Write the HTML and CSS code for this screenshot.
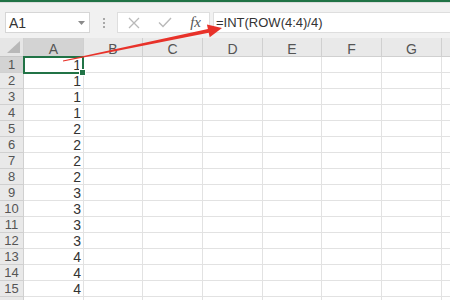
FILE: index.html
```html
<!DOCTYPE html>
<html>
<head>
    <link rel="stylesheet" href="styles.css">
</head>
<body>

    <div class="app">
        <div class="ribbon-edge"></div>

        <div class="formula-bar">
            <div class="name-box">
                <span>A1</span>
                <svg class="caret" width="7" height="4" viewBox="0 0 7 4"><path d="M0 0h7L3.5 4z" fill="#8a8a8a"/></svg>
            </div>
            <div class="grip"><i></i><i></i><i></i></div>
            <div class="fx-buttons">
                <svg width="12" height="12" viewBox="0 0 12 12"><path d="M1 1l10 10M11 1L1 11" stroke="#b9b9b9" stroke-width="1.3" fill="none"/></svg>
                <svg width="14" height="11" viewBox="0 0 14 11"><path d="M1 5.5l4 4L13 1" stroke="#b9b9b9" stroke-width="1.4" fill="none"/></svg>
                <span class="fx">fx</span>
            </div>
            <div class="formula-input">=INT(ROW(4:4)/4)</div>
        </div>

        <div class="sheet">
            <div class="corner"></div>
            <div class="col-head active">A</div><div class="col-head">B</div><div class="col-head">C</div><div class="col-head">D</div><div class="col-head">E</div><div class="col-head">F</div><div class="col-head">G</div><div class="col-head"></div>

            <div class="row-head active">1</div><div class="cell num selected">1</div><div class="cell"></div><div class="cell"></div><div class="cell"></div><div class="cell"></div><div class="cell"></div><div class="cell"></div><div class="cell"></div>
            <div class="row-head">2</div><div class="cell num">1</div><div class="cell"></div><div class="cell"></div><div class="cell"></div><div class="cell"></div><div class="cell"></div><div class="cell"></div><div class="cell"></div>
            <div class="row-head">3</div><div class="cell num">1</div><div class="cell"></div><div class="cell"></div><div class="cell"></div><div class="cell"></div><div class="cell"></div><div class="cell"></div><div class="cell"></div>
            <div class="row-head">4</div><div class="cell num">1</div><div class="cell"></div><div class="cell"></div><div class="cell"></div><div class="cell"></div><div class="cell"></div><div class="cell"></div><div class="cell"></div>
            <div class="row-head">5</div><div class="cell num">2</div><div class="cell"></div><div class="cell"></div><div class="cell"></div><div class="cell"></div><div class="cell"></div><div class="cell"></div><div class="cell"></div>
            <div class="row-head">6</div><div class="cell num">2</div><div class="cell"></div><div class="cell"></div><div class="cell"></div><div class="cell"></div><div class="cell"></div><div class="cell"></div><div class="cell"></div>
            <div class="row-head">7</div><div class="cell num">2</div><div class="cell"></div><div class="cell"></div><div class="cell"></div><div class="cell"></div><div class="cell"></div><div class="cell"></div><div class="cell"></div>
            <div class="row-head">8</div><div class="cell num">2</div><div class="cell"></div><div class="cell"></div><div class="cell"></div><div class="cell"></div><div class="cell"></div><div class="cell"></div><div class="cell"></div>
            <div class="row-head">9</div><div class="cell num">3</div><div class="cell"></div><div class="cell"></div><div class="cell"></div><div class="cell"></div><div class="cell"></div><div class="cell"></div><div class="cell"></div>
            <div class="row-head">10</div><div class="cell num">3</div><div class="cell"></div><div class="cell"></div><div class="cell"></div><div class="cell"></div><div class="cell"></div><div class="cell"></div><div class="cell"></div>
            <div class="row-head">11</div><div class="cell num">3</div><div class="cell"></div><div class="cell"></div><div class="cell"></div><div class="cell"></div><div class="cell"></div><div class="cell"></div><div class="cell"></div>
            <div class="row-head">12</div><div class="cell num">3</div><div class="cell"></div><div class="cell"></div><div class="cell"></div><div class="cell"></div><div class="cell"></div><div class="cell"></div><div class="cell"></div>
            <div class="row-head">13</div><div class="cell num">4</div><div class="cell"></div><div class="cell"></div><div class="cell"></div><div class="cell"></div><div class="cell"></div><div class="cell"></div><div class="cell"></div>
            <div class="row-head">14</div><div class="cell num">4</div><div class="cell"></div><div class="cell"></div><div class="cell"></div><div class="cell"></div><div class="cell"></div><div class="cell"></div><div class="cell"></div>
            <div class="row-head">15</div><div class="cell num">4</div><div class="cell"></div><div class="cell"></div><div class="cell"></div><div class="cell"></div><div class="cell"></div><div class="cell"></div><div class="cell"></div>
            <div class="row-head"></div><div class="cell"></div><div class="cell"></div><div class="cell"></div><div class="cell"></div><div class="cell"></div><div class="cell"></div><div class="cell"></div><div class="cell"></div>
        </div>

        <!-- red annotation arrow drawn over the sheet -->
        <svg class="arrow" width="450" height="300" viewBox="0 0 450 300">
            <polygon points="62.9,60.5 207.9,28.9 206.9,24.4 222,28 209.7,37.2 208.7,32.8 63.1,61.6" fill="#e8322a"/>
        </svg>
    </div>

</body>
</html>
```

FILE: styles.css
```css
body {
    margin: 0;
    padding: 0;
    font-family: "Liberation Sans", Arial, sans-serif;
    background-color: #fff;
    overflow: hidden;
}

.app {
    position: relative;
    width: 450px;
    height: 300px;
    overflow: hidden;
}

.ribbon-edge {
    height: 2px;
    background-color: #217346;
    border-bottom: 1px solid #dcdcdc;
}

.formula-bar {
    height: 35px;
    background-color: #f1f1f1;
    display: flex;
    align-items: center;
    padding-left: 5px;
    box-sizing: border-box;
    padding-top: 4px;
}

.name-box {
    width: 85px;
    height: 21px;
    box-sizing: border-box;
    background-color: #fff;
    border: 1px solid #d6d6d6;
    display: flex;
    align-items: center;
    justify-content: space-between;
    padding: 0 4px 0 3px;
    font-size: 14px;
    color: #333;
}

.grip {
    width: 27px;
    display: flex;
    flex-direction: column;
    align-items: center;
    gap: 2px;
}

.grip i {
    width: 2px;
    height: 2px;
    background-color: #a8a8a8;
}

.fx-buttons {
    width: 93px;
    height: 21px;
    box-sizing: border-box;
    background-color: #fff;
    border: 1px solid #dedede;
    display: flex;
    align-items: center;
    justify-content: space-between;
    padding: 0 8px 0 10px;
}

.fx {
    font-family: "Liberation Serif", serif;
    font-style: italic;
    font-size: 15px;
    color: #555;
}

.formula-input {
    flex: 1;
    height: 21px;
    box-sizing: border-box;
    margin-left: 3px;
    background-color: #fff;
    border: 1px solid #dedede;
    border-right: none;
    padding-left: 2px;
    font-size: 13px;
    line-height: 19px;
    color: #333;
}

.sheet {
    display: grid;
    grid-template-columns: 24px 60px 59px 60px 60px 59px 60px 60px 30px;
    grid-template-rows: 19px repeat(16, 16px);
    background-color: #fff;
}

.corner {
    background-color: #e6e6e6;
    border-right: 1px solid #d0d0d0;
    border-bottom: 1px solid #c6c6c6;
    position: relative;
}

.corner::after {
    content: "";
    position: absolute;
    right: 3px;
    bottom: 3px;
    border-left: 13px solid transparent;
    border-bottom: 12px solid #b8b8b8;
}

.col-head,
.row-head {
    box-sizing: border-box;
    background-color: #e9e9e9;
    color: #555;
    font-size: 14px;
    display: flex;
    align-items: center;
    justify-content: center;
    border-right: 1px solid #d0d0d0;
    border-bottom: 1px solid #d0d0d0;
}

.col-head {
    padding-top: 3px;
}

.row-head {
    font-size: 13px;
}

.col-head.active,
.row-head.active {
    background-color: #d3d3d3;
}

.cell {
    box-sizing: border-box;
    border-right: 1px solid #e2e2e2;
    border-bottom: 1px solid #e2e2e2;
    font-size: 14px;
    color: #333;
    line-height: 16px;
}

.cell.num {
    text-align: right;
    padding-right: 2px;
}

.cell.selected {
    position: relative;
}

.cell.selected::before {
    content: "";
    position: absolute;
    left: -1px;
    top: -1px;
    right: -1px;
    bottom: -2px;
    border: 2px solid #217346;
}

.cell.selected::after {
    content: "";
    position: absolute;
    right: -3px;
    bottom: -4px;
    width: 5px;
    height: 5px;
    background-color: #217346;
    border: 1px solid #fff;
}

.arrow {
    position: absolute;
    left: 0;
    top: 0;
    pointer-events: none;
}
```
